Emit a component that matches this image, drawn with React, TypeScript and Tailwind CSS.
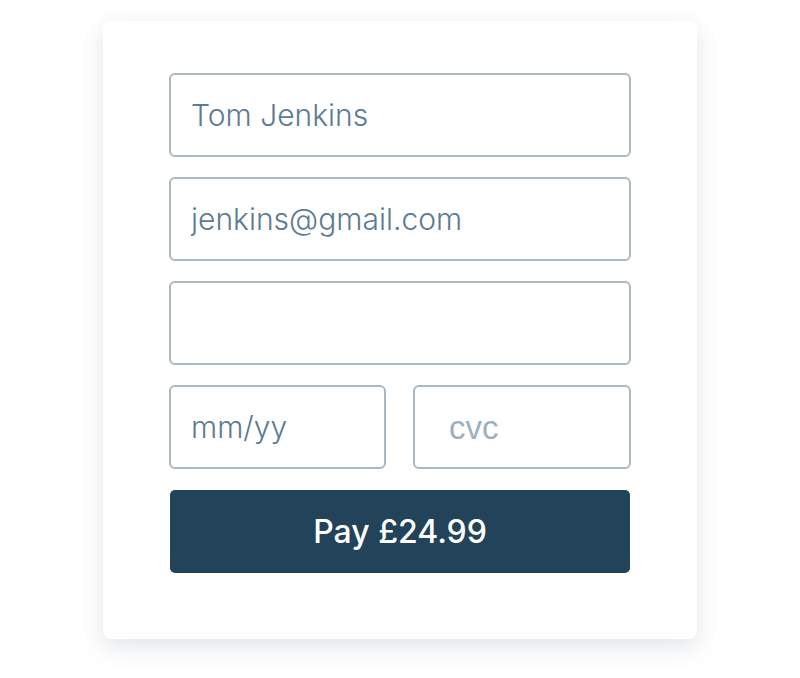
import React, { useState } from 'react';

const inputBase =
  'min-w-0 h-[84px] rounded-[6px] border-2 border-[#a9b8c3] bg-white text-[30px] font-light text-[#5e7b92] outline-none placeholder:text-[#5e7b92]';

const App: React.FC = () => {
  const [name, setName] = useState('Tom Jenkins');
  const [email, setEmail] = useState('jenkins@gmail.com');
  const [card, setCard] = useState('');
  const [expiry, setExpiry] = useState('');
  const [cvc, setCvc] = useState('');

  return (
    <div className="min-h-screen bg-white flex justify-center pt-[21px] font-['Inter',sans-serif]">
      <div className="w-[594px] h-[618px] bg-white rounded-[8px] shadow-[0_8px_24px_rgba(30,50,70,0.13)] px-[66px] pt-[52px]">
        <form
          className="flex flex-col gap-[20px]"
          onSubmit={(e) => e.preventDefault()}
        >
          {/* Name */}
          <input
            className={`${inputBase} w-full px-[20px]`}
            value={name}
            onChange={(e) => setName(e.target.value)}
          />
          {/* Email */}
          <input
            className={`${inputBase} w-full px-[20px]`}
            value={email}
            onChange={(e) => setEmail(e.target.value)}
          />
          {/* Card number */}
          <input
            className={`${inputBase} w-full px-[20px]`}
            value={card}
            onChange={(e) => setCard(e.target.value)}
          />
          <div className="flex gap-[27px]">
            <input
              className={`${inputBase} w-[217px] px-[20px]`}
              placeholder="mm/yy"
              value={expiry}
              onChange={(e) => setExpiry(e.target.value)}
            />
            <input
              className="min-w-0 flex-1 h-[84px] rounded-[6px] border-2 border-[#a9b8c3] bg-white pl-[34px] pr-[20px] pt-[2px] text-[33px] font-['Liberation_Sans',sans-serif] text-[#9cb0bf] outline-none placeholder:text-[#9cb0bf]"
              placeholder="cvc"
              value={cvc}
              onChange={(e) => setCvc(e.target.value)}
            />
          </div>
          <button
            type="submit"
            className="mx-px mt-[1px] h-[83px] rounded-[5px] bg-[#224359] text-white text-[32px] font-medium"
          >
            Pay £24.99
          </button>
        </form>
      </div>
    </div>
  );
};

export default App;
